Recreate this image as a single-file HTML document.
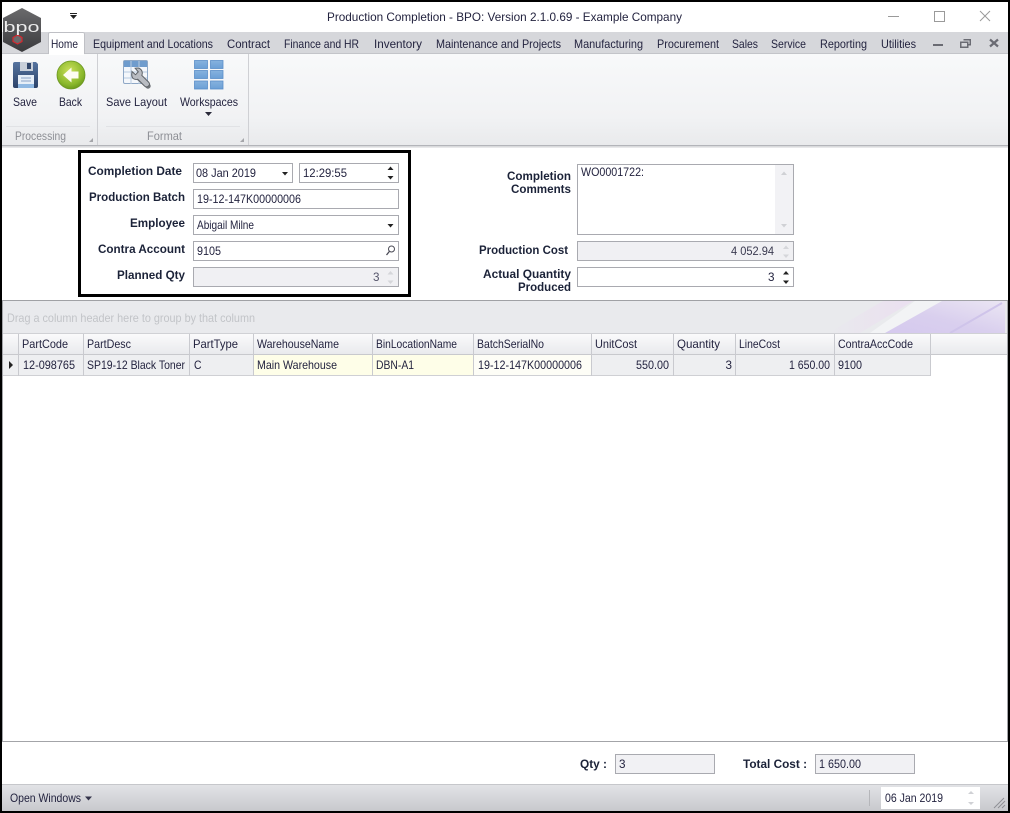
<!DOCTYPE html>
<html lang="en">
<head>
<meta charset="utf-8">
<title>Production Completion</title>
<style>
html,body{margin:0;padding:0;background:#fff;width:1010px;height:813px;overflow:hidden}
svg{display:block;position:absolute;left:0;top:0}
text{font-family:"Liberation Sans",sans-serif;font-size:12px;fill:#23233f;white-space:pre}
.b{font-weight:bold;fill:#1b2238}
.g{fill:#8d8f95}
.f{fill:none;stroke:#a9aab0;stroke-width:1;shape-rendering:crispEdges}
.c{shape-rendering:crispEdges}
</style>
</head>
<body>
<svg width="1010" height="813" viewBox="0 0 1010 813" xmlns="http://www.w3.org/2000/svg">
<defs>
<linearGradient id="rib" x1="0" y1="0" x2="0" y2="1"><stop offset="0" stop-color="#f8f9fa"/><stop offset="0.7" stop-color="#f1f2f4"/><stop offset="1" stop-color="#e9eaec"/></linearGradient>
<linearGradient id="hdr" x1="0" y1="0" x2="0" y2="1"><stop offset="0" stop-color="#fbfbfc"/><stop offset="1" stop-color="#e9eaed"/></linearGradient>
<linearGradient id="st" x1="0" y1="0" x2="0" y2="1"><stop offset="0" stop-color="#e3e4e7"/><stop offset="1" stop-color="#c8c9cd"/></linearGradient>
<linearGradient id="pur" x1="0" y1="1" x2="1" y2="0"><stop offset="0" stop-color="#d5c9ee"/><stop offset=".45" stop-color="#d9cfee"/><stop offset="1" stop-color="#ebe6f3"/></linearGradient>
<linearGradient id="pnk" x1="0" y1="0" x2="1" y2="0"><stop offset="0" stop-color="#e9eaed"/><stop offset="1" stop-color="#eadff0"/></linearGradient>
<radialGradient id="gr" cx=".45" cy=".35" r=".7"><stop offset="0" stop-color="#cbe05a"/><stop offset=".7" stop-color="#8ab82c"/><stop offset="1" stop-color="#649218"/></radialGradient>
<linearGradient id="fl" x1="0" y1="0" x2="0" y2="1"><stop offset="0" stop-color="#56749f"/><stop offset="1" stop-color="#2c4268"/></linearGradient>
<linearGradient id="bl" x1="0" y1="0" x2="0" y2="1"><stop offset="0" stop-color="#86b2de"/><stop offset="1" stop-color="#6b9fd6"/></linearGradient>
<linearGradient id="hex" x1="0" y1="0" x2="0" y2="1"><stop offset="0" stop-color="#6a6a6c"/><stop offset="1" stop-color="#3a3a3d"/></linearGradient>
</defs>

<!-- title bar + tab strip -->
<rect class="c" x="0" y="0" width="1010" height="813" fill="#fff"/>
<rect class="c" x="0" y="32" width="1010" height="21" fill="#d6d7db"/>
<rect class="c" x="0" y="53" width="1010" height="92" fill="url(#rib)"/>
<rect class="c" x="0" y="53" width="1010" height="1" fill="#c3c4c9"/>
<rect class="c" x="0" y="145" width="1010" height="1.5" fill="#b3b4b9"/>
<rect class="c" x="0" y="147" width="1010" height="1" fill="#e8e8ea"/>

<path class="c" d="M48.5 54V34.5q0-2 2-2h32q2 0 2 2V54" fill="#fff" stroke="#bfc0c5"/>
<rect class="c" x="49" y="53" width="35" height="2" fill="#fff"/>

<!-- logo -->
<polygon points="22,8 41,18 41,42 22,52 3,42 3,18" fill="url(#hex)"/>
<polygon points="17.500,35 22,37.500 22,41.500 17.500,44 13,41.500 13,37.500" fill="#6a6a6c" stroke="#d8262c" stroke-width="1.200"/>
<text x="3.500" y="32" textLength="36" lengthAdjust="spacingAndGlyphs" style="font-size:15px;fill:#ececec">bpo</text>

<!-- QAT arrow -->
<rect class="c" x="70" y="13" width="7" height="1" fill="#222"/>
<polygon points="70,15 77,15 73.500,19" fill="#222"/>

<text x="327" y="21" textLength="355" lengthAdjust="spacingAndGlyphs">Production Completion - BPO: Version 2.1.0.69 - Example Company</text>

<!-- window controls -->
<rect class="c" x="888" y="16" width="11" height="1" fill="#9a9a9a"/>
<rect class="c" x="934.500" y="11.500" width="10" height="10" fill="none" stroke="#9a9a9a"/>
<path d="M980 11L990 21M990 11L980 21" stroke="#9a9a9a" fill="none"/>

<!-- tabs -->
<text x="51" y="48" textLength="27" lengthAdjust="spacingAndGlyphs">Home</text>
<g style="fill:#3a3a52">
<text x="93" y="48" textLength="120" lengthAdjust="spacingAndGlyphs">Equipment and Locations</text>
<text x="227" y="48" textLength="43" lengthAdjust="spacingAndGlyphs">Contract</text>
<text x="284" y="48" textLength="75" lengthAdjust="spacingAndGlyphs">Finance and HR</text>
<text x="374" y="48" textLength="48" lengthAdjust="spacingAndGlyphs">Inventory</text>
<text x="436" y="48" textLength="125" lengthAdjust="spacingAndGlyphs">Maintenance and Projects</text>
<text x="574" y="48" textLength="69" lengthAdjust="spacingAndGlyphs">Manufacturing</text>
<text x="657" y="48" textLength="62" lengthAdjust="spacingAndGlyphs">Procurement</text>
<text x="732" y="48" textLength="26" lengthAdjust="spacingAndGlyphs">Sales</text>
<text x="771" y="48" textLength="35" lengthAdjust="spacingAndGlyphs">Service</text>
<text x="820" y="48" textLength="47" lengthAdjust="spacingAndGlyphs">Reporting</text>
<text x="881" y="48" textLength="35" lengthAdjust="spacingAndGlyphs">Utilities</text>
</g>

<!-- mdi buttons -->
<rect class="c" x="933" y="44" width="10" height="2" fill="#6a6b73"/>
<path class="c" d="M963.500 39.500h6.500v5h-2.500M960.500 42h7v5h-7z" fill="none" stroke="#6a6b73" stroke-width="1.500"/>
<path d="M990 39.500L998 46.500M998 39.500L990 46.500" stroke="#6a6b73" stroke-width="2.200" fill="none"/>

<!-- ribbon separators -->
<rect class="c" x="97" y="54" width="1" height="91" fill="#cfd0d4"/>
<rect class="c" x="248" y="54" width="1" height="91" fill="#cfd0d4"/>
<rect class="c" x="6" y="126" width="84" height="1" fill="#e1e2e5"/>
<rect class="c" x="106" y="126" width="134" height="1" fill="#e1e2e5"/>
<polygon points="93,138 93,142 89,142" fill="#a5a6aa"/>
<polygon points="244,138 244,142 240,142" fill="#a5a6aa"/>

<!-- Save icon -->
<path d="M13 64q0-2 2-2h21l2 2v22q0 2-2 2H15q-2 0-2-2z" fill="url(#fl)"/>
<rect x="20" y="62" width="13" height="9" fill="#c9d0da"/>
<rect x="27" y="63" width="4" height="6" fill="#33486c"/>
<rect x="18" y="75" width="16" height="13" fill="#e6eef7"/>
<rect x="18" y="84" width="16" height="4" fill="#8fb8e2"/>
<path class="c" d="M21 78h10M21 81h10" stroke="#8ba3c4" fill="none"/>

<!-- Back icon -->
<circle cx="71" cy="75" r="14" fill="url(#gr)" stroke="#6b9620" stroke-width=".8"/>
<polygon points="63,75 71.500,67.500 71.500,71.500 78.500,71.500 78.500,78.500 71.500,78.500 71.500,82.500" fill="#fdfdf2"/>

<!-- Save Layout icon -->
<rect x="123.500" y="60.500" width="24" height="23" rx="1.500" fill="#f4f7fb" stroke="#8fa8c6"/>
<rect x="124" y="61" width="23" height="6" fill="#6f9ccd"/>
<path class="c" d="M124 72h23M124 78h23M131 61v23M139 61v23" stroke="#b9cbe0" fill="none"/>
<path d="M139 78l9 8" stroke="#6f7378" stroke-width="5.400" fill="none" stroke-linecap="round"/>
<path d="M132 71.500l3.500 3.200 2.800-2.800-3.200-3.700q4.500-1 6.500 2.200 1.300 2.600.2 5l6.700 6.600q2 2.200 0 4t-4 0l-6.800-6.800q-2.500.8-4.600-.7-2-2-1.100-6.300z" fill="#b9bcc2" stroke="#5f6368" stroke-width="1"/>

<!-- Workspaces icon -->
<g fill="url(#bl)" stroke="#5b8ec8" stroke-width=".8">
<rect x="194.500" y="60.500" width="13" height="8"/><rect x="210.500" y="60.500" width="12.500" height="8"/>
<rect x="194.500" y="70.500" width="13" height="8"/><rect x="210.500" y="70.500" width="12.500" height="8"/>
<rect x="194.500" y="81" width="13" height="8"/><rect x="210.500" y="81" width="12.500" height="8"/>
</g>

<text x="13" y="106" textLength="24" lengthAdjust="spacingAndGlyphs">Save</text>
<text x="59" y="106" textLength="23" lengthAdjust="spacingAndGlyphs">Back</text>
<text x="106" y="106" textLength="61" lengthAdjust="spacingAndGlyphs">Save Layout</text>
<text x="180" y="106" textLength="58" lengthAdjust="spacingAndGlyphs">Workspaces</text>
<polygon points="205,112 212,112 208.500,116" fill="#2a2a3a"/>
<text class="g" x="15" y="140" textLength="51" lengthAdjust="spacingAndGlyphs">Processing</text>
<text class="g" x="147" y="140" textLength="35" lengthAdjust="spacingAndGlyphs">Format</text>

<!-- left form -->
<rect class="c" x="79.500" y="151.500" width="330" height="144" fill="none" stroke="#000" stroke-width="3"/>
<text class="b" x="88" y="175" textLength="94" lengthAdjust="spacingAndGlyphs">Completion Date</text>
<text class="b" x="89" y="201" textLength="96" lengthAdjust="spacingAndGlyphs">Production Batch</text>
<text class="b" x="130" y="227" textLength="55" lengthAdjust="spacingAndGlyphs">Employee</text>
<text class="b" x="98" y="253" textLength="87" lengthAdjust="spacingAndGlyphs">Contra Account</text>
<text class="b" x="117" y="279" textLength="68" lengthAdjust="spacingAndGlyphs">Planned Qty</text>

<rect class="f" x="193.500" y="163.500" width="99" height="19"/>
<text x="196" y="177" textLength="60" lengthAdjust="spacingAndGlyphs">08 Jan 2019</text>
<polygon points="282,172 288,172 285,175.500" fill="#222"/>
<rect class="f" x="299.500" y="163.500" width="99" height="19"/>
<text x="303" y="177" textLength="44" lengthAdjust="spacingAndGlyphs">12:29:55</text>
<polygon points="387.500,170 393.500,170 390.500,166.500" fill="#222"/>
<polygon points="387.500,176 393.500,176 390.500,179.500" fill="#222"/>

<rect class="f" x="193.500" y="189.500" width="205" height="19"/>
<text x="197" y="203" textLength="104" lengthAdjust="spacingAndGlyphs">19-12-147K00000006</text>

<rect class="f" x="193.500" y="215.500" width="205" height="19"/>
<text x="197" y="229" textLength="57" lengthAdjust="spacingAndGlyphs">Abigail Milne</text>
<polygon points="387.500,224 393.500,224 390.500,227.500" fill="#222"/>

<rect class="f" x="193.500" y="241.500" width="205" height="19"/>
<text x="197" y="255" textLength="24" lengthAdjust="spacingAndGlyphs">9105</text>
<circle cx="391.500" cy="249" r="3" fill="none" stroke="#4a4a55" stroke-width="1"/>
<path d="M389.300 251.500L386.500 255" stroke="#4a4a55" stroke-width="1.300" fill="none"/>

<rect class="f" x="193.500" y="267.500" width="205" height="19" style="fill:#f0f0f3"/>
<text x="373" y="281" textLength="6.500" lengthAdjust="spacingAndGlyphs" style="fill:#55556a">3</text>
<polygon points="387.500,274.500 393.500,274.500 390.500,271" fill="#d5d6da"/>
<polygon points="387.500,280.500 393.500,280.500 390.500,284" fill="#d5d6da"/>

<!-- right form -->
<text class="b" x="507" y="180" textLength="64" lengthAdjust="spacingAndGlyphs">Completion</text>
<text class="b" x="511" y="193" textLength="60" lengthAdjust="spacingAndGlyphs">Comments</text>
<text class="b" x="479" y="254" textLength="89" lengthAdjust="spacingAndGlyphs">Production Cost</text>
<text class="b" x="483" y="278" textLength="88" lengthAdjust="spacingAndGlyphs">Actual Quantity</text>
<text class="b" x="518" y="291" textLength="53" lengthAdjust="spacingAndGlyphs">Produced</text>

<rect class="c" x="775" y="165" width="18" height="69" fill="#f2f2f5"/>
<rect class="f" x="577.500" y="164.500" width="216" height="70"/>
<text x="581" y="176" textLength="63" lengthAdjust="spacingAndGlyphs">WO0001722:</text>
<polygon points="781,175 787,175 784,171.500" fill="#d0d1d5"/>
<polygon points="781,224 787,224 784,227.500" fill="#d0d1d5"/>

<rect class="f" x="577.500" y="241.500" width="216" height="19" style="fill:#f0f0f3"/>
<text x="731" y="255" textLength="43" lengthAdjust="spacingAndGlyphs" style="fill:#3a3a50">4 052.94</text>
<polygon points="783,249 789,249 786,245.500" fill="#d5d6da"/>
<polygon points="783,254.500 789,254.500 786,258" fill="#d5d6da"/>

<rect class="f" x="577.500" y="267.500" width="216" height="19"/>
<text x="768" y="281" textLength="6.500" lengthAdjust="spacingAndGlyphs">3</text>
<polygon points="783,274.500 789,274.500 786,271" fill="#222"/>
<polygon points="783,280.500 789,280.500 786,284" fill="#222"/>

<!-- grid group panel -->
<rect class="c" x="2" y="300" width="1006" height="33" fill="#e9eaed"/>
<polygon points="850,333 905,301 935,301 882,333" fill="url(#pnk)" transform="translate(-22,0)"/>
<polygon points="870,333 905,333 945,301 915,301" fill="#f2f3f5"/>
<polygon points="885,333 942,301 1005,301 1005,333" fill="url(#pur)"/>
<path d="M950 333L1002 303" stroke="#cfc4ea" stroke-width="2" fill="none"/>
<rect class="c" x="2" y="300" width="1006" height="1" fill="#a0a1a5"/>
<text x="7" y="322" textLength="248" lengthAdjust="spacingAndGlyphs" style="fill:#c2c4c8">Drag a column header here to group by that column</text>

<!-- grid header -->
<rect class="c" x="2" y="333" width="929" height="21" fill="url(#hdr)"/>
<rect class="c" x="931" y="333" width="77" height="21" fill="url(#hdr)"/>
<rect class="c" x="2" y="333" width="1006" height="1" fill="#d0d1d5"/>
<rect class="c" x="2" y="354" width="1006" height="1" fill="#c8c9cd"/>

<!-- grid row -->
<rect class="c" x="2" y="355" width="929" height="20" fill="#eeeff1"/>
<rect class="c" x="254" y="355" width="220" height="20" fill="#fefee8"/>
<rect class="c" x="474" y="355" width="118" height="20" fill="#fdfdf6"/>
<rect class="c" x="2" y="375" width="929" height="1" fill="#cfd0d4"/>
<g class="c" fill="#c9cacf">
<rect x="18" y="334" width="1" height="42"/><rect x="83" y="334" width="1" height="42"/>
<rect x="189" y="334" width="1" height="42"/><rect x="253" y="334" width="1" height="42"/>
<rect x="372" y="334" width="1" height="42"/><rect x="473" y="334" width="1" height="42"/>
<rect x="591" y="334" width="1" height="42"/><rect x="673" y="334" width="1" height="42"/>
<rect x="735" y="334" width="1" height="42"/><rect x="834" y="334" width="1" height="42"/>
<rect x="930" y="334" width="1" height="42"/>
</g>
<polygon points="9,361 9,369 13,365" fill="#222"/>

<text x="22" y="348" textLength="46" lengthAdjust="spacingAndGlyphs">PartCode</text>
<text x="87" y="348" textLength="44" lengthAdjust="spacingAndGlyphs">PartDesc</text>
<text x="193" y="348" textLength="45" lengthAdjust="spacingAndGlyphs">PartType</text>
<text x="257" y="348" textLength="82" lengthAdjust="spacingAndGlyphs">WarehouseName</text>
<text x="376" y="348" textLength="81" lengthAdjust="spacingAndGlyphs">BinLocationName</text>
<text x="477" y="348" textLength="67" lengthAdjust="spacingAndGlyphs">BatchSerialNo</text>
<text x="595" y="348" textLength="42" lengthAdjust="spacingAndGlyphs">UnitCost</text>
<text x="677" y="348" textLength="43" lengthAdjust="spacingAndGlyphs">Quantity</text>
<text x="739" y="348" textLength="41" lengthAdjust="spacingAndGlyphs">LineCost</text>
<text x="838" y="348" textLength="75" lengthAdjust="spacingAndGlyphs">ContraAccCode</text>

<text x="23" y="369" textLength="52" lengthAdjust="spacingAndGlyphs">12-098765</text>
<text x="87" y="369" textLength="98" lengthAdjust="spacingAndGlyphs">SP19-12 Black Toner</text>
<text x="194" y="369" textLength="7.500" lengthAdjust="spacingAndGlyphs">C</text>
<text x="257" y="369" textLength="80" lengthAdjust="spacingAndGlyphs">Main Warehouse</text>
<text x="376" y="369" textLength="38" lengthAdjust="spacingAndGlyphs">DBN-A1</text>
<text x="478" y="369" textLength="104" lengthAdjust="spacingAndGlyphs">19-12-147K00000006</text>
<text x="636" y="369" textLength="33" lengthAdjust="spacingAndGlyphs">550.00</text>
<text x="725.500" y="369" textLength="6.500" lengthAdjust="spacingAndGlyphs">3</text>
<text x="789" y="369" textLength="41" lengthAdjust="spacingAndGlyphs">1 650.00</text>
<text x="838" y="369" textLength="24" lengthAdjust="spacingAndGlyphs">9100</text>

<!-- grid bottom -->
<rect class="c" x="2" y="741" width="1006" height="1" fill="#a3a4a8"/>
<rect class="c" x="2" y="301" width="1" height="440" fill="#a3a4a8"/>
<rect class="c" x="1007" y="301" width="1" height="440" fill="#a3a4a8"/>

<!-- totals -->
<text class="b" x="580" y="768" textLength="27" lengthAdjust="spacingAndGlyphs">Qty :</text>
<rect class="f" x="615.500" y="754.500" width="99" height="19" style="fill:#f1f1f4"/>
<text x="619" y="768" textLength="6.500" lengthAdjust="spacingAndGlyphs">3</text>
<text class="b" x="743" y="768" textLength="64" lengthAdjust="spacingAndGlyphs">Total Cost :</text>
<rect class="f" x="815.500" y="754.500" width="99" height="19" style="fill:#f1f1f4"/>
<text x="819" y="768" textLength="42" lengthAdjust="spacingAndGlyphs">1 650.00</text>

<!-- status bar -->
<rect class="c" x="0" y="784" width="1010" height="27" fill="url(#st)"/>
<rect class="c" x="0" y="784" width="1010" height="1" fill="#c6c7cb"/>
<text x="10" y="802" textLength="71" lengthAdjust="spacingAndGlyphs">Open Windows</text>
<polygon points="85,796.500 92,796.500 88.500,800.500" fill="#33334a"/>
<rect class="c" x="869" y="790" width="1" height="16" fill="#b5b6ba"/>
<rect class="c" x="881" y="787" width="99" height="22" fill="#fff"/>
<text x="885" y="802" textLength="58" lengthAdjust="spacingAndGlyphs">06 Jan 2019</text>
<polygon points="968,794 974,794 971,791" fill="#d0d1d5"/>
<polygon points="968,802 974,802 971,805" fill="#d0d1d5"/>
<path d="M994 808L1004 798M998 808L1005 801M1002 808L1005 805" stroke="#8f9095" stroke-width="1" fill="none"/>

<!-- outer border -->
<rect class="c" x="0" y="0" width="1010" height="2" fill="#000"/>
<rect class="c" x="0" y="0" width="2" height="813" fill="#000"/>
<rect class="c" x="1008" y="0" width="2" height="813" fill="#000"/>
<rect class="c" x="0" y="811" width="1010" height="2" fill="#000"/>
</svg>
</body>
</html>
